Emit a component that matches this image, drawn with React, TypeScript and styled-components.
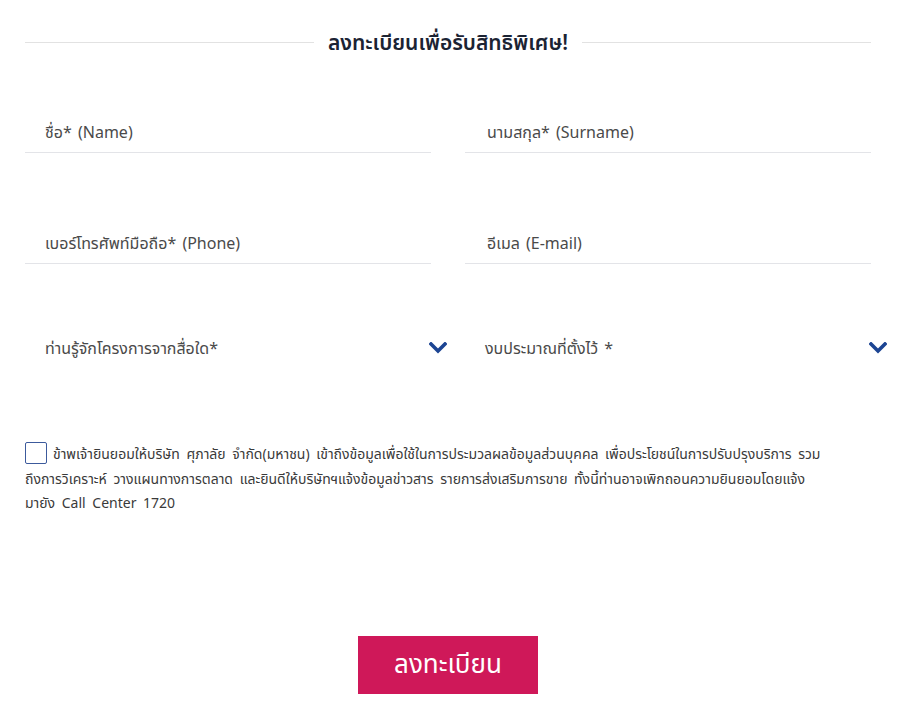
import React from "react";
import styled, { createGlobalStyle } from "styled-components";

const Global = createGlobalStyle`
  html, body { margin: 0; padding: 0; background: #fff; }
  body { font-family: "Noto Sans", "Noto Sans Thai", "Liberation Sans", sans-serif; }
`;

const Page = styled.div`
  width: 900px;
  height: 714px;
  box-sizing: border-box;
  padding: 28px 0 0 25px;
  overflow: hidden;
`;

const TitleRow = styled.div`
  display: flex;
  align-items: center;
  width: 846px;
  gap: 14px;
`;

const Rule = styled.div`
  flex: 1;
  height: 1px;
  background: #e2e2e2;
`;

const Title = styled.h2`
  margin: 0;
  font-size: 21px;
  font-weight: 600;
  color: #1b2333;
  line-height: 28px;
  white-space: nowrap;
`;

const InputGrid = styled.div`
  display: grid;
  grid-template-columns: 406px 406px;
  column-gap: 34px;
  row-gap: 36px;
  margin-top: 22px;
`;

const Field = styled.div<{ $pad?: number }>`
  height: 75px;
  display: flex;
  align-items: flex-end;
  border-bottom: 1px solid #e3e4e8;
  box-sizing: border-box;
  padding: 0 0 8px ${(p) => p.$pad ?? 20}px;
`;

const Label = styled.span`
  font-size: 16px;
  color: #4a4a4a;
  line-height: 24px;
  word-spacing: 2px;
`;

const SelectGrid = styled.div`
  display: grid;
  grid-template-columns: 430px 430px;
  column-gap: 10px;
  margin-top: 64px;
`;

const Select = styled.div`
  display: flex;
  align-items: center;
  justify-content: space-between;
  padding: 0 8px 0 20px;
  height: 40px;
`;

const Chevron = () => (
  <svg width="18" height="12" viewBox="0 0 18 12">
    <path d="M2 2 L9 9 L16 2" fill="none" stroke="#1d4593" strokeWidth="3.6" strokeLinecap="square" />
  </svg>
);

const Consent = styled.div`
  margin-top: 74px;
  width: 846px;
  font-size: 14px;
  line-height: 24.5px;
  word-spacing: 3px;
  color: #3a3a3a;
`;

const Box = styled.span`
  display: inline-block;
  width: 22px;
  height: 22px;
  box-sizing: border-box;
  border: 1.5px solid #3c5a9c;
  border-radius: 2px;
  vertical-align: -5px;
  margin-right: 6px;
`;

const ButtonRow = styled.div`
  display: flex;
  justify-content: center;
  width: 846px;
  margin-top: 120px;
`;

const Button = styled.button`
  width: 180px;
  height: 58px;
  border: none;
  background: #cf1859;
  color: #fff;
  font-family: inherit;
  font-size: 26px;
  cursor: pointer;
  padding: 0;
`;

export default function App() {
  return (
    <Page>
      <Global />
      <TitleRow>
        <Rule />
        <Title>ลงทะเบียนเพื่อรับสิทธิพิเศษ!</Title>
        <Rule />
      </TitleRow>
      <InputGrid>
        <Field><Label>ชื่อ* (Name)</Label></Field>
        <Field $pad={22}><Label>นามสกุล* (Surname)</Label></Field>
        <Field><Label>เบอร์โทรศัพท์มือถือ* (Phone)</Label></Field>
        <Field $pad={22}><Label>อีเมล (E-mail)</Label></Field>
      </InputGrid>
      <SelectGrid>
        <Select><Label>ท่านรู้จักโครงการจากสื่อใด*</Label><Chevron /></Select>
        <Select><Label>งบประมาณที่ตั้งไว้ *</Label><Chevron /></Select>
      </SelectGrid>
      <Consent>
        <Box />
        ข้าพเจ้ายินยอมให้บริษัท ศุภาลัย จำกัด(มหาชน) เข้าถึงข้อมูลเพื่อใช้ในการประมวลผลข้อมูลส่วนบุคคล เพื่อประโยชน์ในการปรับปรุงบริการ รวม
        <br />
        ถึงการวิเคราะห์ วางแผนทางการตลาด และยินดีให้บริษัทฯแจ้งข้อมูลข่าวสาร รายการส่งเสริมการขาย ทั้งนี้ท่านอาจเพิกถอนความยินยอมโดยแจ้ง
        <br />
        มายัง Call Center 1720
      </Consent>
      <ButtonRow>
        <Button>ลงทะเบียน</Button>
      </ButtonRow>
    </Page>
  );
}
